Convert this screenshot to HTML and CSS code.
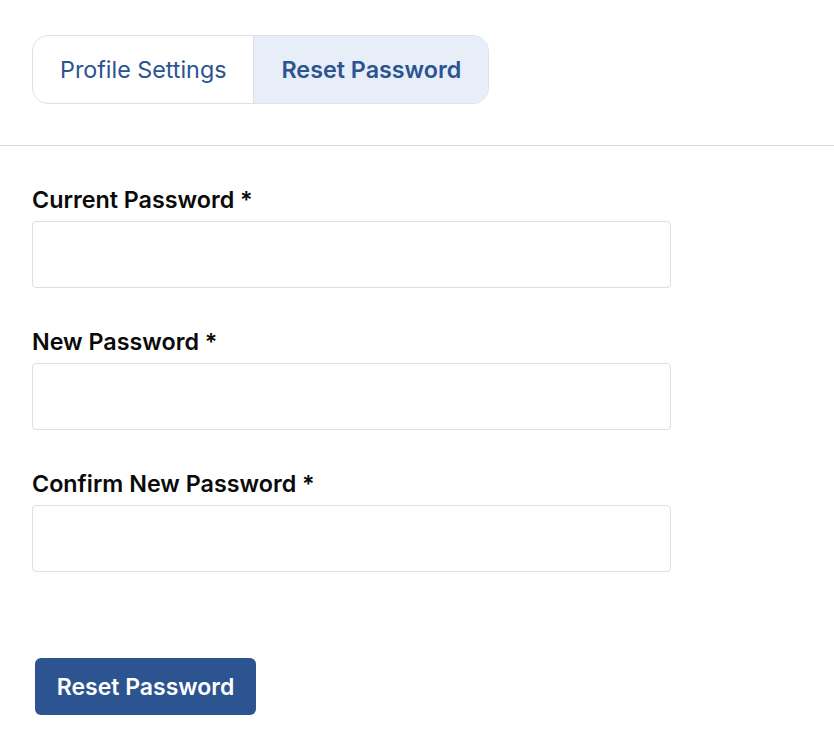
FILE: index.html
```html
<!DOCTYPE html>
<html>
<head>
<meta charset="utf-8">
<link rel="stylesheet" href="styles.css">
</head>
<body>
<div class="tabs-wrap">
  <div class="tabs">
    <div class="tab">Profile Settings</div>
    <div class="tab active">Reset Password</div>
  </div>
</div>
<form class="form">
  <div class="field">
    <label class="label">Current Password *</label>
    <input class="input" type="password">
  </div>
  <div class="field">
    <label class="label">New Password *</label>
    <input class="input" type="password">
  </div>
  <div class="field">
    <label class="label">Confirm New Password *</label>
    <input class="input" type="password">
  </div>
  <div class="actions">
    <button type="button" class="btn">Reset Password</button>
  </div>
</form>
</body>
</html>
```
FILE: styles.css
```css
* { box-sizing: border-box; }
html, body { margin: 0; padding: 0; background: #fff; }
body { font-family: Inter, "Noto Sans", sans-serif; color: #000; }
.tabs-wrap {
  padding: 35px 32px 41px;
  border-bottom: 1px solid #d9dadd;
}
.tabs {
  display: inline-flex;
  border: 1px solid #dde1e8;
  border-radius: 16px;
  overflow: hidden;
  height: 69px;
}
.tab {
  display: flex;
  align-items: center;
  justify-content: center;
  padding: 0 27px;
  font-size: 23.3px;
  color: #2b5491;
  font-weight: 400;
}
.tab.active {
  background: #e8eef8;
  border-left: 1px solid #dde1e8;
  font-weight: 600;
}
.form {
  padding: 40px 32px 0;
  display: flex;
  flex-direction: column;
  gap: 40px;
}
.field { display: flex; flex-direction: column; gap: 7px; }
.label {
  font-size: 23.3px;
  font-weight: 600;
  line-height: 28px;
  color: #0a0a0a;
}
.input {
  width: 639px;
  height: 67px;
  border: 1px solid #dcdee3;
  border-radius: 4px;
  background: #fff;
}
.actions { padding-top: 46px; padding-left: 3px; }
.btn {
  background: #2b5491;
  color: #fff;
  border: none;
  border-radius: 6px;
  height: 57px;
  width: 221px;
  padding: 0;
  font-family: Inter, "Noto Sans", sans-serif;
  font-size: 23px;
  font-weight: 600;
}
```
